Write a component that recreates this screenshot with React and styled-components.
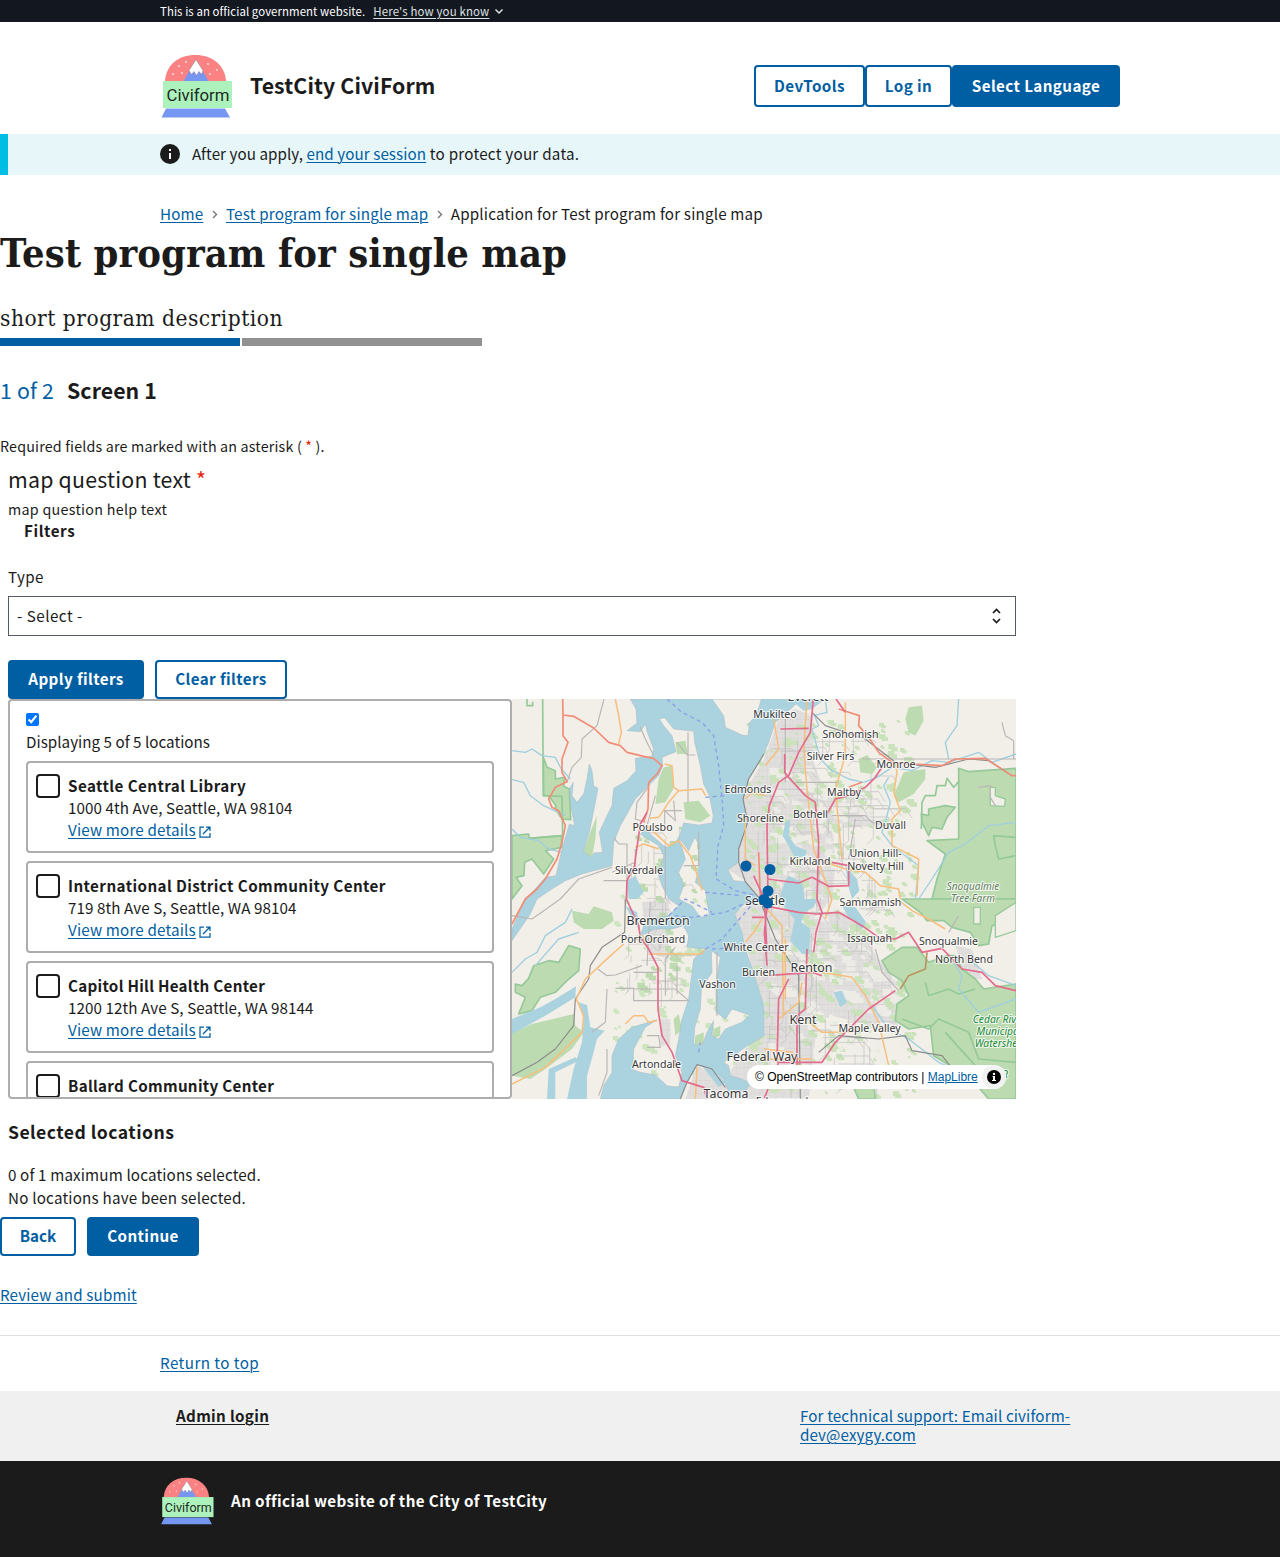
import React from "react";
import styled, { createGlobalStyle } from "styled-components";

const sans = '"Noto Sans CJK SC", "Noto Sans", sans-serif';
const blue = "#005ea2";
const ink = "#1b1b1b";

const GlobalStyle = createGlobalStyle`
  *, *::before, *::after { box-sizing: border-box; }
  body { margin: 0; background: #fff; color: ${ink}; font: 15.2px/22px ${sans}; letter-spacing: 0.17px; }
  h1, h2, h3, p { margin: 0; font-weight: 400; }
`;

const Link = styled.a`
  color: ${(p) => p.$color || blue};
  font-weight: ${(p) => (p.$bold ? 700 : 400)};
  letter-spacing: ${(p) => p.$track ?? 0.17}px;
  text-decoration: underline;
  text-decoration-thickness: 1px;
  text-underline-offset: 2px;
  white-space: nowrap;
`;
const Text = styled.span`
  letter-spacing: ${(p) => p.$track ?? 0.17}px;
  white-space: nowrap;
`;
const Container = styled.div`
  width: 960px;
  margin: 0 auto;
  display: flex;
  align-items: center;
`;

const Banner = styled.div`
  height: 22px;
  background: #13171f;
  color: #fff;
  font-size: 11.4px;
  line-height: 22px;
  svg { margin-left: 5px; }
`;
const BannerLink = styled(Link)`margin-left: 8px;`;
const Header = styled.header`
  height: 112px;
  padding-top: 30px;
  svg { margin-top: 1px; margin-bottom: -1px; }
`;
const Brand = styled.span`
  margin-left: 16px;
  padding-bottom: 2px;
  flex: 1;
  font-size: 21.3px;
  line-height: 30px;
  font-weight: 700;
  letter-spacing: 0.1px;
`;
const Button = styled.button`
  height: ${(p) => (p.$tall ? 42 : 39)}px;
  width: ${(p) => p.$w}px;
  padding: 0 0 ${(p) => (p.$tall ? 2 : 3)}px;
  border: 2px solid ${blue};
  border-radius: 4px;
  background: ${(p) => (p.$outline ? "#fff" : blue)};
  color: ${(p) => (p.$outline ? blue : "#fff")};
  font: 700 15.2px/20px ${sans};
  letter-spacing: ${(p) => p.$track ?? 0.4}px;
  white-space: nowrap;
`;
const Alert = styled.div`
  height: 41px;
  padding-bottom: 2px;
  background: #e7f6f8;
  box-shadow: inset 8px 0 0 #00bde3;
  display: flex;
  svg { margin-right: 12px; }
`;
const AlertText = styled(Text)`padding-bottom: 2px;`;
const Breadcrumbs = styled.nav`
  height: 58px;
  padding-top: 27px;
  svg { margin: 3px 8px 0 8.5px; }
`;
const Title = styled.h1`
  height: 42px;
  font: 700 39.5px/41px "DejaVu Serif Condensed", "DejaVu Serif", serif;
  font-stretch: condensed;
  letter-spacing: 0.06px;
  white-space: nowrap;
`;
const Description = styled.p`
  margin: 29px 0 6px;
  font: 400 22.5px/28px "DejaVu Serif Condensed", "DejaVu Serif", serif;
  font-stretch: condensed;
  letter-spacing: 0.5px;
`;
const Progress = styled.div`
  display: flex;
  gap: 2px;
`;
const Segment = styled.div`
  width: 240px;
  height: 8px;
  background: ${(p) => (p.$done ? blue : "#919191")};
`;
const StepHeading = styled.h2`
  margin-top: 29px;
  display: flex;
  gap: 13px;
  font-size: 21.3px;
  line-height: 30px;
  font-weight: 700;
`;
const StepCount = styled.span`
  color: ${blue};
  font-weight: 400;
`;
const Required = styled.p`
  margin-top: 30px;
  font-size: 14.3px;
`;
const Star = styled.span`color: #e52207;`;
const Question = styled.section`
  width: 1024px;
  padding: 7px 8px 0;
`;
const QuestionText = styled.h2`
  font-size: 21.3px;
  line-height: 30px;
  letter-spacing: 0.23px;
`;
const Help = styled.p`
  margin: 5px 0 0;
  font-size: 14.3px;
  line-height: 20px;
  letter-spacing: 0.28px;
`;
const FilterTitle = styled.h3`
  padding-left: 16px;
  font-size: 15.2px;
  font-weight: 700;
  letter-spacing: 0.57px;
`;
const FieldLabel = styled.label`
  display: block;
  margin: 24px 0 9px;
  letter-spacing: 0.4px;
`;
const Select = styled.div`
  height: 40px;
  padding: 0 14px 2px 8px;
  border: 1px solid #565c65;
  display: flex;
  align-items: center;
  justify-content: space-between;
  svg { margin-top: 2px; }
`;
const ButtonRow = styled.div`
  display: flex;
  gap: 11px;
  margin-top: ${(p) => p.$top}px;
`;
const MapRow = styled.div`
  display: flex;
  height: 400px;
`;
const List = styled.div`
  width: 504px;
  padding: 12px 16px 0;
  border: 2px solid #adadad;
  border-radius: 4px;
  overflow: hidden;
`;
const NativeCheck = styled.input`
  display: block;
  width: 13px;
  height: 13px;
  margin: 0 0 4px;
`;
const ListStatus = styled.div`
  margin-bottom: 9px;
  letter-spacing: 0.02px;
`;
const Card = styled.div`
  height: 92px;
  margin-bottom: 8px;
  padding: 11px 8px;
  border: 2px solid #adadad;
  border-radius: 4px;
  display: flex;
  gap: 8px;
`;
const Box = styled.span`
  width: 24px;
  height: 24px;
  border: 2px solid ${ink};
  border-radius: 4px;
`;
const CardBody = styled.div`
  display: flex;
  flex-direction: column;
`;
const CardName = styled.span`
  font-weight: 700;
  letter-spacing: ${(p) => p.$track}px;
`;
const DetailLine = styled.span`
  display: flex;
  align-items: center;
  gap: 3px;
  svg { margin-top: 5px; }
`;
const MapFrame = styled.div`
  position: relative;
  width: 504px;
  height: 400px;
  letter-spacing: 0;
  svg { display: block; }
`;
const Attribution = styled.div`
  position: absolute;
  right: 10px;
  bottom: 10px;
  width: 259px;
  height: 24px;
  padding-left: 8px;
  border-radius: 12px;
  background: #fff;
  display: flex;
  align-items: center;
  justify-content: space-between;
  white-space: nowrap;
  font: 12px/20px "Liberation Sans", Arial, sans-serif;
  color: #000;
  a { color: ${blue}; }
`;
const InfoDot = styled.span`
  width: 24px;
  height: 24px;
  border-radius: 12px;
  background: #f2f2f2;
  display: grid;
  place-items: center;
`;
const SelectedTitle = styled.h3`
  margin: 21px 0 19px;
  font-size: 17.6px;
  line-height: 24px;
  font-weight: 700;
  letter-spacing: 0.46px;
`;
const Status = styled.p`
  line-height: 23px;
  letter-spacing: ${(p) => p.$track}px;
`;
const Review = styled.div`
  margin: 27px 0 30px;
  height: 22px;
`;
const ReturnBar = styled.div`
  height: 56px;
  padding-top: 15px;
  border-top: 1px solid #dfe1e2;
`;
const Support = styled.div`
  height: 70px;
  padding-top: 15px;
  background: #f0f0f0;
  line-height: 19px;
`;
const SupportRow = styled(Container)`
  align-items: flex-start;
  justify-content: space-between;
  padding-left: 16px;
`;
const Contact = styled.div`
  width: 320px;
  display: flex;
  flex-direction: column;
  align-items: flex-start;
`;
const Identifier = styled.footer`
  height: 96px;
  padding-top: 15px;
  background: ${ink};
  color: #fff;
  font-weight: 700;
`;
const IdentifierText = styled.span`
  margin-left: 16px;
  padding-bottom: 4px;
  letter-spacing: 0.4px;
`;

function Logo({ width, height }) {
  const dots = [[13, 21], [19, 13], [26, 9], [22, 20], [48, 11], [57, 17], [50, 21]];
  return (
    <svg width={width} height={height} viewBox="0 0 74 68">
      <path d="M5 28 C6 12 18 2 35.500 2 C52 2 65 12 66 28Z" fill="#fa8282" />
      {dots.map(([x, y]) => <circle key={x} cx={x} cy={y} r=".9" fill="#ffe4e2" />)}
      <path d="M23.500 28 L36 7 L48.500 28Z" fill="#7597f2" />
      <path d="M36 6.500 L29 17.500 L31.500 21.500 L34 18.500 L36.500 22.500 L39 18.500 L41.500 21.500 L43 17.500Z" fill="#fff" stroke="#7d7488" strokeWidth=".5" />
      <path d="M6 55.500 H65 L70 64.500 H1.500Z" fill="#7597f2" />
      <rect x="3" y="28" width="69" height="27" fill="#adf2bd" />
      <text x="6.500" y="48" fontFamily="Roboto, sans-serif" fontSize="16.800" fontWeight="400" letterSpacing="0" fill="#1c2a20" textLength="63">Civiform</text>
    </svg>
  );
}

const Info = ({ size, fill = ink }) => (
  <svg width={size} height={size} viewBox="0 0 20 20">
    <circle cx="10" cy="10" r="10" fill={fill} />
    <path d="M9 5h2v2H9zM9 9h2v6H9z" fill="#fff" />
  </svg>
);
const AttributionInfo = () => (
  <svg width="14" height="14" viewBox="0 0 14 14">
    <circle cx="7" cy="7" r="7" fill="#000" />
    <path d="M5.500 6H8v4h1v1H5v-1h1V7h-.5z" fill="#fff" />
    <circle cx="7" cy="3.900" r="1.200" fill="#fff" />
  </svg>
);
const Chevron = () => (
  <svg width="6" height="9" viewBox="0 0 6 9"><path d="M1 1l3.500 3.500L1 8" fill="none" stroke="#71767a" strokeWidth="1.400" /></svg>
);
const External = () => (
  <svg width="12" height="12" viewBox="0 0 12 12" fill="none" stroke={blue} strokeWidth="1.250">
    <path d="M5 1H1v10h10V7M7 1h4v4M11 1L4 8" />
  </svg>
);

const seeded = (seed) => () => {
  seed = (seed * 16807) % 2147483647;
  return seed / 2147483647;
};
const scatter = (seed, n, x0, y0, w, h, size) => {
  const r = seeded(seed);
  let d = "";
  for (let i = 0; i < n; i++) {
    const s = size * (0.4 + r());
    const x = x0 + r() * w;
    const y = y0 + r() * h;
    d += `M${x.toFixed(0)} ${y.toFixed(0)}h${s.toFixed(0)}v${(s * 0.5).toFixed(0)}h${(s * 0.4).toFixed(0)}v${(s * 0.6).toFixed(0)}h${(-s).toFixed(0)}v${(-s * 0.3).toFixed(0)}h${(-s * 0.4).toFixed(0)}z`;
  }
  return d;
};
const lanes = (seed, n, x0, y0, w, h, len) => {
  const r = seeded(seed);
  let d = "";
  for (let i = 0; i < n; i++) {
    const l = len * (0.3 + r());
    const x = x0 + r() * w;
    const y = y0 + r() * h;
    d += r() > 0.5
      ? `M${x.toFixed(0)} ${y.toFixed(0)}h${l.toFixed(0)}l${(l * 0.2).toFixed(0)} ${(l * 0.3).toFixed(0)}`
      : `M${x.toFixed(0)} ${y.toFixed(0)}v${l.toFixed(0)}l${(-l * 0.2).toFixed(0)} ${(l * 0.2).toFixed(0)}`;
  }
  return d;
};

const parks = [
  "M0 410L50 405 52 418 148 410 150 445 100 455 125 480 95 525 60 480 38 490 36 530 12 535 30 560 0 600Z",
  "M94 175L105 205 130 215 130 240 158 235 155 262 172 270 176 362 150 360 130 330 132 320 110 290 95 290Z",
  "M455 205L480 200 484 270 460 310 430 315 440 240Z",
  "M490 130L520 125 528 165 495 165Z", "M515 310L560 305 595 350 565 370 520 360Z",
  "M255 350L235 400 214 458 240 475 250 420Z",
  "M180 635L230 645 245 622 300 640 305 665 270 690 215 690 185 670Z",
  "M10 855L30 860 50 838 65 800 110 785 140 790 170 740 205 750 200 815 165 845 130 880 85 895 60 935 20 945 40 895 10 880Z",
  "M0 1000L60 975 185 945 190 980 215 1000 180 1050 100 1110 55 1140 0 1130Z",
  "M500 945L510 990 490 1010 485 960Z", "M550 1010L575 1000 575 1040 548 1035Z", "M605 990L625 980 625 1010 600 1020Z", "M525 1065L550 1080 545 1095Z",
  "M1040 180L1065 168 1095 205 1080 225 1045 220Z", "M1175 220L1240 210 1240 240 1205 285 1160 310 1145 290Z",
  "M1190 25L1230 20 1235 65 1210 110 1190 100 1180 60Z",
  "M1228 345L1250 350 1250 330 1300 320 1330 325 1305 355 1290 390 1260 385 1250 410 1230 370Z",
  "M1340 208L1370 218 1512 208 1512 600 1260 600 1275 540 1300 465 1245 425 1340 420Z",
  "M1170 600L1512 600 1512 665 1440 680 1430 735 1400 740 1375 700 1320 685 1295 665 1245 665 1225 640Z",
  "M1110 785L1170 745 1215 745 1250 790 1305 770 1330 770 1350 810 1390 840 1415 870 1512 855 1512 1200 1430 1200 1370 1130 1315 1100 1265 1070 1255 980 1190 990 1150 965 1155 915 1190 890 1170 845 1130 820Z",
  "M1000 1110L1080 1100 1090 1200 1040 1200Z",
];
const towns = [
  "M712 255L756 180 800 60 850 30 900 50 905 190 960 340 970 500 960 600 925 640 890 780 930 850 890 1200 520 1200 555 1100 640 1140 700 1050 756 1010 755 920 690 700 668 645 735 595 700 545 648 512 680 450 707 370 693 300Z",
  "M925 640L1040 640 1085 760 1170 870 1160 950 1075 980 960 950 880 980Z",
  "M1090 800L1140 800 1170 850 1150 980 1080 950Z", "M1330 740L1380 750 1410 840 1360 840Z",
  "M390 610L470 600 470 780 405 760Z", "M445 960h30v80h-30Z", "M940 250L1080 320 1090 380 960 390Z",
];
const soundPath = "M355 0L372 30 375 72 345 95 385 98 400 76 406 100 425 150 420 172 370 178 372 215 345 245 305 268 300 320 285 350 262 400 272 460 245 462 240 475 214 458 232 400 250 310 258 268 245 260 240 215 232 195 225 240 215 285 195 310 180 290 184 250 172 270 178 330 188 380 172 375 150 450 132 530 100 535 65 575 40 600 0 690 0 725 55 645 75 600 120 570 160 545 210 525 300 500 305 430 325 380 345 345 370 300 408 262 440 230 452 200 450 175 492 158 480 110 455 80 442 60 458 56 485 90 545 97 548 130 565 200 575 255 592 290 604 350 600 372 560 378 515 372 505 405 485 440 460 445 400 392 385 405 440 440 455 470 440 530 450 560 470 600 500 620 470 650 400 665 385 710 430 690 480 690 515 680 530 710 525 745 580 750 545 780 535 860 530 900 510 960 500 1020 490 1070 510 1120 500 1165 465 1160 430 1128 385 1120 362 1112 365 1050 400 985 435 962 360 985 320 1020 300 1070 300 1120 275 1160 265 1200 505 1200 525 1150 555 1097 585 1105 635 1140 650 1180 700 1175 715 1155 690 1140 655 1130 650 1100 635 1090 700 1045 756 1010 755 920 725 820 700 750 690 700 668 645 700 612 735 620 740 595 720 575 700 548 665 545 648 512 680 490 680 450 707 370 693 300 710 240 755 165 770 130 790 70 835 30 870 0ZM600 0L635 50 640 85 690 108 708 110 712 72 735 45 748 0ZM502 418L530 455 548 415 563 440 562 500 550 550 580 575 592 650 565 655 540 620 500 600 515 560 500 520 520 480ZM598 755L625 775 612 850 612 940 640 960 660 930 712 948 690 970 640 990 620 1020 600 1010 605 965 585 1000 570 1040 545 1035 548 985 565 930 568 870 600 820Z";
const lakes = [
  "M820 370L835 360 830 410 850 440 885 455 880 470 850 478 830 440 812 410Z",
  "M820 545L830 530 870 550 878 600 915 600 905 625 878 640 868 670 895 690 892 765 870 765 835 725 848 660 800 605Z",
  "M1000 500L1035 540 1042 575 1020 600 1010 565ZM990 620L1030 625 1062 670 1050 690 1010 655Z",
  "M0 960L85 925 130 900 192 862 190 895 100 950 0 1005Z",
  "M200 910L225 918 235 985 278 995 255 1020 245 1060 225 1130 225 1200 165 1200 185 1110 210 1030 215 960Z",
  "M105 1200L110 1110 190 1075 200 1085 130 1120 130 1200Z",
  "M340 620L375 640 385 700 350 640Z", "M965 880L990 875 1005 910 985 925Z", "M570 1100L600 1115 640 1150 620 1165Z",
  "M835 0H940L900 30 875 35Z", "M345 545L370 530 395 580 375 600 350 600Z",
];
const rivers = "M0 155L40 160 60 150 90 170 130 175 148 210 175 240M0 242L35 250 55 290 95 320 160 350M0 390L25 415 80 425 110 450 150 460M0 820L40 780 75 760 100 710 160 670 180 630M905 50L945 40 940 0M908 50L920 80 900 90 925 180 960 215 1010 240 1055 250 1095 235 1140 205 1200 215 1260 185 1310 190 1400 160 1440 190 1512 165M1340 0L1335 80 1300 130 1310 180M1130 235L1115 260 1135 310 1120 370 1110 400 1140 440 1180 470 1220 500 1210 600M1220 600L1260 540 1310 460 1360 435 1430 380 1512 370M1325 790L1350 830 1340 870 1400 940 1512 900M1080 920L1130 990 1190 1020 1280 1090 1350 1120M1370 780L1430 830 1512 860M0 980L60 945M70 800L140 720 200 700";
const minor = "M276 0L255 80 210 120 208 175 180 205 165 250M300 505L200 540 145 600 60 660 0 650M385 85L400 120 425 170M408 265L375 310 370 360 400 370M528 100V310M495 130L525 168H550M458 335V395M485 305L490 365 458 335H510M305 415L320 435H345V600M370 450V490L300 520M460 600V440M430 290L405 380M275 545H345M415 610L405 800M365 820H435M365 870H435M310 868H365V905H530L490 870H440M257 810L285 830 310 828 390 800M405 1010L440 1010 445 1045 405 1045M285 1050V1120L260 1190M285 870L280 970 240 1000M495 800V885M615 760V950M490 745L460 780V890M960 350L1060 350 1080 370 1125 380M1030 360L1010 480M820 60V250M850 250H980M1090 750L1110 820 1160 875M1470 70L1480 110 1505 125V180M1400 265L1435 260 1435 295 1450 320M1340 650L1310 700M560 400V500H515M1050 180H1512";
const orange = "M310 0L320 50 328 100 320 135M458 195L480 200 485 265 500 275 570 270 580 290M500 275L470 310 440 355 412 358M405 380L470 440 500 425 535 470 560 540 570 575M370 445L395 435 440 450M335 735L290 775 220 840 193 900 215 950 210 1000 100 1105 0 1155M410 765H570L578 750M435 965L410 970 395 950 365 950 340 975M1150 190L1155 220 1145 280 1165 335 1140 360 1140 440 1220 480 1215 590M940 490L1000 510 1060 520 1105 560 1160 570 1165 600M1155 600L1200 635 1250 660 1300 690M930 820L1020 835 1060 890 1100 970 1130 1100M890 970L930 1000H1020M800 960L860 910 870 850M820 720V900M700 300L720 280 760 290M700 350V480L730 500M885 0L875 150 885 270 905 450 960 600 940 660M1000 10V170L970 270 990 480M750 660L725 700 700 730M756 620L810 680 815 950M555 1105L550 1200M785 60L800 150 760 200M756 1050L840 1060 880 1140M750 1080H900";
const red = "M152 0L153 48 185 52 245 87 290 130 325 140 345 160 395 172 425 178 450 200 435 225 410 250 408 330 395 370M153 48V110L168 130 150 180V220L165 248 130 265 110 300 120 325 140 335 160 380 150 430 135 480 100 540 75 570 40 600 0 675M980 30L1010 40 1042 50 1040 80 1070 115 1100 160 1140 190 1200 195 1290 200 1330 180 1420 178 1500 230 1512 230M740 460L745 600M1010 265L1050 250";
const magenta = "M405 340L385 375 370 480 368 500 345 545 343 600 380 680 385 715 410 750 438 805 438 930 450 1010 480 1060 510 1145 575 1165 585 1200M972 0L1000 40M904 0L895 100 860 160 830 230 800 250 772 320 765 380 768 600 757 700 765 800M805 90L890 88M818 165V220L830 235 880 290 910 310 920 430 915 600 930 640 912 700 905 760M945 345L970 300 1010 290 1060 265 1090 235 1110 205M765 540L860 552 900 535 950 562 1010 560V500L960 490M915 645L980 640 1050 680 1100 715 1150 720 1190 700 1230 760 1290 748 1350 810 1410 820 1450 860 1512 875M756 620L860 640 915 645M765 830L900 820 930 830M830 840L800 900 795 1090M885 750L880 930 855 950 855 1100M850 1090L930 1090 970 1030 1000 1000 1070 930 1150 875M720 655H756M756 1200L800 1090 850 1090M725 530L757 600 765 760";
const rail = "M756 165L710 240 693 300 707 370 680 450 680 490 700 548 740 595 790 720 860 830 865 1200M900 40L940 80 1060 120 1150 190 1270 205 1370 180 1430 185 1500 230M340 600L338 700 270 745 235 800 230 840 190 900 185 980 130 1050 75 1090 0 1130M505 1200L525 1150 555 1097 600 1110 640 1165M920 1060L980 1010 1100 1020 1180 1010 1200 1055 1290 1070 1330 1120";
const ferries = "M465 0L510 40 570 70 605 110 620 200 630 300 635 380 618 440 612 540 670 575 735 590M580 295L640 290M488 650L540 655 640 640 735 595M580 750L630 720 735 600M560 1060L565 1030M470 650L520 600 600 640M600 750L700 745M580 580L690 590";

const labels = [
  [263, 19, "Mukilteo", 11], [338.500, 39, "Snohomish", 11], [318.500, 61, "Silver Firs", 11], [384, 69, "Monroe", 11],
  [236, 94, "Edmonds", 11], [332, 97, "Maltby", 11], [248.500, 123, "Shoreline", 11], [298.500, 119, "Bothell", 11],
  [378.500, 130, "Duvall", 11], [140.500, 132, "Poulsbo", 11], [363.500, 158, "Union Hill-", 11], [363.500, 171, "Novelty Hill", 11],
  [298, 166, "Kirkland", 11], [127, 175, "Silverdale", 11], [253, 206, "Seattle", 13], [358.500, 207, "Sammamish", 11],
  [146, 226, "Bremerton", 13], [141, 244, "Port Orchard", 11], [244, 252, "White Center", 11], [357.500, 242.500, "Issaquah", 11],
  [436.500, 246, "Snoqualmie", 11], [452, 263.500, "North Bend", 11], [246.500, 277, "Burien", 11], [299.500, 273, "Renton", 13],
  [205.500, 289, "Vashon", 11], [291, 325, "Kent", 13], [357.500, 333, "Maple Valley", 11], [250, 362, "Federal Way", 13],
  [144.500, 369, "Artondale", 11], [214, 398.500, "Tacoma", 13], [296, 2, "Everett", 13], [270, 406, "Edgewood", 11],
];
const pins = [[234, 167], [258, 170.500], [256, 192], [252, 200.500], [255.500, 204]];

function CityMap() {
  return (
    <svg width="504" height="400" viewBox="0 0 504 400">
      <defs>
        <pattern id="blocks" width="23" height="19" patternUnits="userSpaceOnUse">
          <path d="M0 4H23M6 0V19M15 4V19" stroke="#cfcdcc" strokeWidth="1" fill="none" />
        </pattern>
      </defs>
      <g transform="scale(.3333333)" fill="none" strokeLinejoin="round">
        <rect width="1512" height="1200" fill="#f2efe9" />
        <path d={scatter(77, 170, 300, 560, 800, 640, 14)} fill="#cde5bf" />
        {towns.map((d) => <path key={d} d={d} fill="#e2e0de" />)}
        {towns.map((d) => <path key={d} d={d} fill="url(#blocks)" />)}
        <path d={scatter(8, 260, 770, 200, 400, 950, 24)} fill="#efede7" opacity=".85" />
        <path d={scatter(12, 380, 700, 60, 500, 1120, 15)} fill="#c9e2b9" />
        <path d={scatter(31, 45, 360, 380, 220, 500, 18)} fill="#bddbae" />
        <path d={lanes(5, 55, 340, 380, 190, 500, 60)} stroke="#c6c3c1" strokeWidth="2.200" />
        <path d={lanes(9, 170, 730, 100, 370, 1050, 80)} stroke="#c4c2c2" strokeWidth="2.200" />
        {parks.map((d, i) => (
          <path key={d} d={d} fill="#bddbb1" stroke={i === 0 || i === 1 || i === 7 || i > 15 ? "#96c999" : "none"} strokeWidth="5" />
        ))}
        <path d="M1340 248L1325 265 1305 238 1300 260 1275 260 1270 290 1240 290 1230 310 1228 390M92 0L94 290 150 292 152 410 52 418M45 0V20H62V8M1450 440L1445 410 1512 415M1450 440L1460 480 1512 470M1240 850L1250 890 1310 870 1340 885 1390 870M1170 960L1250 990 1280 960 1370 1000 1400 1080 1512 1090M1300 1000L1390 1100 1460 1150" stroke="#94c998" strokeWidth="5" />
        <path d="M1435 265L1450 265 1450 290 1480 300 1478 322 1435 320ZM1385 625h20v50h-20ZM1450 650l62-40v85l-62 20Z" fill="#f2efe9" stroke="#98ca9b" strokeWidth="4" />
        <path d={rivers} stroke="#9fcfdf" strokeWidth="4" />
        <path d={soundPath} fill="#aad3df" fillRule="evenodd" stroke="#a6b9c0" strokeWidth="1.500" />
        {lakes.map((d) => <path key={d} d={d} fill="#aad3df" />)}
        <path d={minor} stroke="#b9b6b6" strokeWidth="3.500" />
        <path d={rail} stroke="#8b8b8b" strokeWidth="3.500" />
        <path d={orange} stroke="#f7be7c" strokeWidth="4.500" />
        <path d={red} stroke="#f18d76" strokeWidth="5" />
        <path d={magenta} stroke="#e46b8b" strokeWidth="5" />
        <path d="M1245 760L1240 810 1190 830 1165 870" stroke="#bb9461" strokeWidth="5" />
        <path d={ferries} stroke="#8b9fe9" strokeWidth="4" strokeDasharray="12 10" />
      </g>
      <g fontFamily='"Noto Sans", sans-serif' textAnchor="middle" fill="#363636" stroke="#fff" strokeOpacity=".75" strokeWidth="2.200" strokeLinejoin="round" paintOrder="stroke">
        {labels.map(([x, y, name, size]) => <text key={name} x={x} y={y} fontSize={size === 11 ? 10.6 : 12.4}>{name}</text>)}
        <g fontSize="10" fontStyle="italic" fill="#66805f">
          <text x="461" y="191">Snoqualmie</text><text x="461" y="203">Tree Farm</text>
        </g>
        <g fontSize="10.300" fontStyle="italic" fill="#238a35">
          <text x="487" y="324">Cedar River</text><text x="487" y="336">Municipal</text><text x="487" y="348">Watershed</text><text x="493" y="379">R</text>
        </g>
      </g>
      {pins.map(([x, y]) => <circle key={x} cx={x} cy={y} r="5.500" fill={blue} />)}
    </svg>
  );
}

const places = [
  { name: "Seattle Central Library", address: "1000 4th Ave, Seattle, WA 98104", track: 0.42 },
  { name: "International District Community Center", address: "719 8th Ave S, Seattle, WA 98104", track: 0.42 },
  { name: "Capitol Hill Health Center", address: "1200 12th Ave S, Seattle, WA 98144", track: 0.28 },
  { name: "Ballard Community Center", track: 0.3 },
];

export default function App() {
  return (
    <>
      <GlobalStyle />
      <Banner>
        <Container>
          <Text $track={0.08}>This is an official government website.</Text>
          <BannerLink $color="#dfe1e2">Here's how you know</BannerLink>
          <svg width="10" height="7" viewBox="0 0 10 7"><path d="M1.500 1.500L5 5l3.500-3.500" fill="none" stroke="#dfe1e2" strokeWidth="1.500" /></svg>
        </Container>
      </Banner>
      <Header>
        <Container>
          <Logo width={74} height={68} />
          <Brand>TestCity CiviForm</Brand>
          <Button $tall $outline $w={111}>DevTools</Button>
          <Button $tall $outline $w={87}>Log in</Button>
          <Button $tall $w={168}>Select Language</Button>
        </Container>
      </Header>
      <Alert>
        <Container>
          <Info size={20} />
          <AlertText><Text $track={0.05}>After you apply, </Text><Link $track={0.08}>end your session</Link><Text $track={0.25}> to protect your data.</Text></AlertText>
        </Container>
      </Alert>
      <Breadcrumbs>
        <Container>
          <Link>Home</Link><Chevron /><Link $track={0.19}>Test program for single map</Link><Chevron />
          <Text>Application for Test program for single map</Text>
        </Container>
      </Breadcrumbs>
      <main>
        <Title>Test program for single map</Title>
        <Description>short program description</Description>
        <Progress><Segment $done /><Segment /></Progress>
        <StepHeading><StepCount>1 of 2</StepCount><Text $track={0.05}>Screen 1</Text></StepHeading>
        <Required>Required fields are marked with an asterisk ( <Star>*</Star> ).</Required>
        <Question>
          <QuestionText>map question text <Star>*</Star></QuestionText>
          <Help>map question help text</Help>
          <FilterTitle>Filters</FilterTitle>
          <FieldLabel>Type</FieldLabel>
          <Select>
            <Text $track={0.5}>- Select -</Text>
            <svg width="9" height="16" viewBox="0 0 9 16"><path d="M1 5l3.500-3.500L8 5M1 11l3.500 3.500L8 11" fill="none" stroke={ink} strokeWidth="1.700" /></svg>
          </Select>
          <ButtonRow $top={24}>
            <Button $w={136}>Apply filters</Button>
            <Button $outline $w={132}>Clear filters</Button>
          </ButtonRow>
          <MapRow>
            <List>
              <NativeCheck type="checkbox" defaultChecked />
              <ListStatus>Displaying 5 of 5 locations</ListStatus>
              {places.map(({ name, address, track }) => (
                <Card key={name}>
                  <Box />
                  <CardBody>
                    <CardName $track={track}>{name}</CardName>
                    {address && <Text $track={0.08}>{address}</Text>}
                    {address && <DetailLine><Link>View more details</Link><External /></DetailLine>}
                  </CardBody>
                </Card>
              ))}
            </List>
            <MapFrame>
              <CityMap />
              <Attribution>
                <span>© OpenStreetMap contributors | <a href="#maplibre">MapLibre</a></span>
                <InfoDot><AttributionInfo /></InfoDot>
              </Attribution>
            </MapFrame>
          </MapRow>
          <SelectedTitle>Selected locations</SelectedTitle>
          <Status $track={0.14}>0 of 1 maximum locations selected.</Status>
          <Status $track={0.2}>No locations have been selected.</Status>
        </Question>
        <ButtonRow $top={8}>
          <Button $outline $w={76} $track={0.05}>Back</Button>
          <Button $w={112}>Continue</Button>
        </ButtonRow>
        <Review><Link $track={0.14}>Review and submit</Link></Review>
      </main>
      <ReturnBar><Container><Link $track={0.44}>Return to top</Link></Container></ReturnBar>
      <Support>
        <SupportRow>
          <Link $bold $color={ink} $track={0.32}>Admin login</Link>
          <Contact>
            <Link $track={0.13}>For technical support: Email civiform-</Link>
            <Link $track={0.08}>dev@exygy.com</Link>
          </Contact>
        </SupportRow>
      </Support>
      <Identifier>
        <Container>
          <Logo width={55} height={51} />
          <IdentifierText>An official website of the City of TestCity</IdentifierText>
        </Container>
      </Identifier>
    </>
  );
}
